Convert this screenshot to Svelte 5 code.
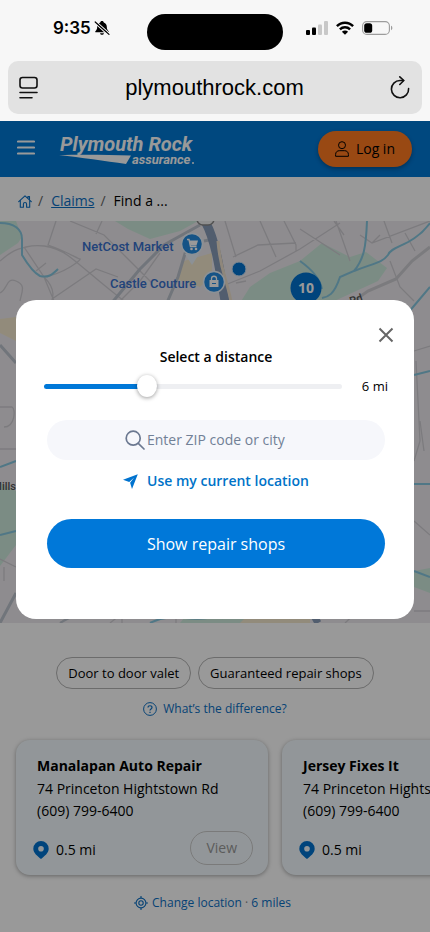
<script>
  let distance = $state(6);
  let zip = $state('');
  const min = 1;
  const max = 16;
  let ratio = $derived((distance - min) / (max - min));

  const filters = ['Door to door valet', 'Guaranteed repair shops'];
  const shops = [
    { name: 'Manalapan Auto Repair', address: '74 Princeton Hightstown Rd', phone: '(609) 799-6400', away: '0.5 mi' },
    { name: 'Jersey Fixes It', address: '74 Princeton Hightstown Rd', phone: '(609) 799-6400', away: '0.5 mi' }
  ];
</script>

<div class="screen">
  <div class="browser">
    <div class="status">
      <div class="clock">
        <span>9:35</span>
        <svg width="16" height="16" viewBox="0 0 16 16" aria-hidden="true">
          <path d="M8 1C6.900 1 6.300 1.700 6.200 2.400C4.200 3 3.200 4.800 3.200 6.800C3.200 9.500 2.300 10.200 1.400 11.200C1 11.700 1.300 12.200 1.800 12.200H14.200C14.700 12.200 15 11.700 14.600 11.200C13.700 10.200 12.800 9.500 12.800 6.800C12.800 4.800 11.800 3 9.800 2.400C9.700 1.700 9.100 1 8 1ZM6 13.200C6.300 14.300 7 14.800 8 14.800S9.700 14.300 10 13.200Z" fill="#000" />
          <path d="M1 3L14 15" stroke="#f7f7f7" stroke-width="1.200" />
          <path d="M2 1.500L15.500 13.500" stroke="#f7f7f7" stroke-width="1.200" />
          <path d="M1.200 2L15 14.400" stroke="#000" stroke-width="1.200" stroke-linecap="round" />
        </svg>
      </div>
      <div class="island"></div>
      <div class="signals">
        <svg width="22" height="14" viewBox="0 0 22 14" aria-hidden="true">
          <rect x="0" y="9" width="4" height="5" rx="1" />
          <rect x="6" y="6.500" width="4" height="7.500" rx="1" />
          <rect x="12" y="3.500" width="4" height="10.500" rx="1" fill="#c8c8c8" />
          <rect x="18" y="0" width="4" height="14" rx="1" fill="#c8c8c8" />
        </svg>
        <svg width="18" height="14" viewBox="0 0 18 14" aria-hidden="true">
          <g fill="none" stroke="#000" stroke-width="2.400">
            <path d="M.9 5.200C5.400.5 12.600.5 17.100 5.200" />
            <path d="M3.900 8.300C6.800 5.500 11.200 5.500 14.100 8.300" />
          </g>
          <path d="M9 13.800L5.900 10.700C7.700 9.200 10.300 9.200 12.100 10.700Z" />
        </svg>
        <svg width="31" height="14" viewBox="0 0 31 14" aria-hidden="true">
          <rect x=".6" y=".6" width="26.800" height="12.800" rx="4.200" fill="none" stroke="#9c9c9c" stroke-width="1.100" />
          <rect x="2.200" y="2.200" width="8" height="9.600" rx="2.600" />
          <path d="M29 4.800C30.800 5.300 30.800 8.700 29 9.200Z" fill="#9c9c9c" />
        </svg>
      </div>
    </div>
    <div class="address-bar">
      <button class="plain" aria-label="Page menu">
        <svg width="20" height="24" viewBox="0 0 20 24" fill="none" stroke="#111" stroke-width="1.600" stroke-linecap="round" aria-hidden="true">
          <rect x="1" y="1.500" width="17" height="10.500" rx="2.500" />
          <path d="M1 16.500H18M1 21.800H13" />
        </svg>
      </button>
      <span>plymouthrock.com</span>
      <button class="plain" aria-label="Reload">
        <svg width="20" height="24" viewBox="0 0 20 24" fill="none" stroke="#111" stroke-width="1.600" stroke-linecap="round" stroke-linejoin="round" aria-hidden="true">
          <path d="M13.500 4.500H10A8.600 8.600 0 1 0 18.600 12.600" />
          <path d="M9.800 .9L13.800 4.500L9.800 8.500" />
        </svg>
      </button>
    </div>
  </div>

  <div class="site">
    <header>
      <button class="plain" aria-label="Menu">
        <svg width="18" height="18" viewBox="0 0 18 18" stroke="#fff" stroke-width="2.200" stroke-linecap="round" aria-hidden="true">
          <path d="M1 1.500H17M1 7.500H17M1 13.500H17" />
        </svg>
      </button>
      <a class="logo" href="#home" aria-label="Plymouth Rock assurance">
        <svg width="138" height="36" viewBox="0 0 138 36" fill="#fff" aria-hidden="true">
          <text class="brand" x="1" y="20">Plymouth Rock</text>
          <path d="M0 24C18 23.500 48 23.500 72 24.500L67 33C46 30 22 26.500 0 24Z" />
          <text class="sub" x="73" y="33">assurance</text>
          <circle cx="134" cy="32" r="1" />
        </svg>
      </a>
      <button class="login">
        <svg width="14" height="16" viewBox="0 0 14 16" fill="none" stroke="#000" stroke-width="1" aria-hidden="true">
          <circle cx="7" cy="4.200" r="3.500" />
          <path d="M.6 15.300V13.500C.6 11 2.300 9.700 4.300 9.700H9.700C11.700 9.700 13.400 11 13.400 13.500V15.300Z" stroke-linejoin="round" />
        </svg>
        Log in
      </button>
    </header>

    <nav class="crumbs" aria-label="Breadcrumb">
      <a href="#home" aria-label="Home">
        <svg width="14" height="13" viewBox="0 0 14 13" fill="none" stroke="#0a6fc4" stroke-width="1.100" stroke-linejoin="round" stroke-linecap="round" aria-hidden="true">
          <path d="M.7 6.600L7 .9L13.300 6.600M2.300 5.400V12.300H5.400V9.200C5.400 7 8.600 7 8.600 9.200V12.300H11.700V5.400M11.500 4.800V1.600H9.900V3.200" />
        </svg>
      </a>
      <i>/</i>
      <a href="#claims">Claims</a>
      <i>/</i>
      <span>Find a ...</span>
    </nav>

    <div class="map">
      <svg viewBox="0 0 430 402" preserveAspectRatio="xMidYMid slice" role="img" aria-label="Map of nearby repair shops">
        <rect width="430" height="402" fill="#edeaee" />
        <g fill="#cde9dc">
          <path d="M0 0H16L22 16L18 22L0 34Z" />
          <path d="M115 0H198L180 10L150 18L128 8Z" />
          <path d="M240 82L250 66L270 52L300 40L322 22L350 36L366 31L387 47L378 60L330 82Z" />
          <path d="M0 262L16 270V324L0 345Z" />
          <path d="M414 350L430 347V372L414 366Z" />
          <path d="M190 390H250V402H180Z" />
        </g>
        <g fill="#f3e8cd">
          <path d="M0 98L16 96V120L0 112Z" />
          <path d="M184 40L212 32V54L200 66L176 58Z" />
          <path d="M252 390H310V402H240Z" />
        </g>
        <g fill="none" stroke="#cfcdd3" stroke-width="1.300">
          <path d="M0 72C8 68 6 56 16 60S22 70 20 80M0 40C14 28 18 28 26 26S52 22 70 36S98 60 124 80M56 0L48 24C66 30 78 38 80 38S66 52 44 56M70 0L104 14L128 38L152 62M96 13L102 0M44 56C60 72 50 82 48 90M110 90L140 60L160 32M52 78L96 48L118 56M36 50L46 42M24 26L44 56L54 80" />
          <path d="M225 0L236 36M260 0L276 36M284 0L296 24L296 30M220 66L260 50L300 28L340 2M233 36L258 24L296 22M236 62L246 60M336 0L350 40M360 14L372 22L430 0M334 0L344 14M384 0L392 22M405 12L415 30M390 40L400 66L414 80M372 22L380 14M300 8L340 34" />
          <path d="M0 186H12C16 188 15 206 4 206M0 228H16M414 130L430 125M414 240L420 220L416 140M420 200L424 230M0 338L16 346M414 300L430 314M414 390H430M4 346V360M110 402L124 391M176 386V402M122 386V402M60 402L76 390M345 402L360 388" />
        </g>
        <g fill="none" stroke="#bcc3cd" stroke-width="3">
          <path d="M110 84L140 48L164 24L200 4M166 84L178 56L190 16M0 402L16 372M0 124L16 142M214 18L204 20" />
          <path d="M348 84L368 70L396 58L412 40L430 26" stroke="#cecdd2" />
          <path d="M60 402L82 390M212 390L222 397L232 388M280 388L290 397L300 388" stroke-width="2" />
        </g>
        <path d="M205 0C216 20 220 50 226 86" fill="none" stroke="#879bb8" stroke-width="9" />
        <path d="M308 384L318 402" fill="none" stroke="#879bb8" stroke-width="7" />
        <path d="M218 20C220 50 228 60 232 86" fill="none" stroke="#efe2ce" stroke-width="3" />
        <g fill="none" stroke="#85c7df" stroke-width="2">
          <path d="M0 2C14 2 22 8 22 18V34C28 44 34 52 40 55C48 57 52 54 58 48" />
          <path d="M300 40C314 50 320 58 322 68M367 0C366 26 364 38 354 50L340 56C334 74 328 76 322 77M354 50C374 42 382 42 388 34C392 24 412 26 430 2M408 92L430 66" />
          <path d="M0 246L16 240M0 314L16 310M414 154L430 150M414 263H430M414 350L430 356M150 402C174 390 190 402 212 396" />
        </g>
        <g class="place">
          <text x="82" y="30">NetCost Market</text>
          <text x="110" y="67">Castle Couture</text>
        </g>
        <path d="M192 44L185 33H199Z" fill="#e9f2fb" />
        <circle cx="192" cy="23" r="10.500" fill="#248be0" stroke="#e9f2fb" stroke-width="1.500" />
        <path d="M187 18.500H189L190.500 25.500H196.500" fill="none" stroke="#fff" stroke-width="1.400" />
        <path d="M189.500 19.500H198L196.500 24.500H190.500Z" fill="#fff" />
        <circle cx="191.500" cy="28" r="1.300" fill="#fff" />
        <circle cx="196" cy="28" r="1.300" fill="#fff" />
        <circle cx="214" cy="61" r="10.500" fill="#248be0" stroke="#e9f2fb" stroke-width="1.500" />
        <path d="M209.500 59H218.500V66H209.500Z" fill="#fff" />
        <path d="M211.500 59V57.500C211.500 54.500 216.500 54.500 216.500 57.500V59" fill="none" stroke="#fff" stroke-width="1.300" />
        <path d="M212 62.500H216" stroke="#248be0" />
        <rect x="197" y="-11" width="17" height="15" rx="6" fill="#eee" stroke="#888" stroke-width="1.500" />
        <circle cx="239" cy="48" r="7" fill="#0072cf" stroke="#cfe3f5" />
        <circle cx="306" cy="67" r="15.500" fill="#0072cf" />
        <text class="count" x="306" y="72" text-anchor="middle">10</text>
        <text class="road" x="351" y="84" transform="rotate(-18 351 84)">Rd</text>
        <text class="road" x="16" y="269" text-anchor="end">Mills</text>
      </svg>
    </div>

    <main>
      <div class="filters">
        {#each filters as filter}
          <button>{filter}</button>
        {/each}
      </div>
      <a class="hint" href="#difference">
        <svg width="14" height="14" viewBox="0 0 14 14" fill="none" stroke="#0a6fc4" aria-hidden="true">
          <circle cx="7" cy="7" r="6.400" />
          <path d="M5 5.600C5 3.100 9 3.200 9 5.500C9 7 7 6.900 7 8.500M7 9.700V10.900" stroke-width="1.200" />
        </svg>
        What’s the difference?
      </a>

      <div class="shops">
        {#each shops as shop}
          <article>
            <h2>{shop.name}</h2>
            <p>{shop.address}</p>
            <p>{shop.phone}</p>
            <div class="foot">
              <div class="away">
                <svg width="16" height="18" viewBox="0 0 16 18" aria-hidden="true">
                  <path d="M8 0A7.700 7.700 0 0 0 .3 7.700C.3 12 4.500 15 8 18C11.500 15 15.700 12 15.700 7.700A7.700 7.700 0 0 0 8 0ZM8 4.900A2.800 2.800 0 1 1 8 10.500A2.800 2.800 0 1 1 8 4.900Z" fill="#0072cf" fill-rule="evenodd" />
                </svg>
                {shop.away}
              </div>
              <button>View</button>
            </div>
          </article>
        {/each}
      </div>

      <a class="hint change" href="#location">
        <svg width="14" height="14" viewBox="0 0 14 14" fill="none" stroke="#0a6fc4" stroke-width="1.100" aria-hidden="true">
          <circle cx="7" cy="7" r="4.900" /><circle cx="7" cy="7" r="2.200" />
          <path d="M7 0V2M7 12V14M0 7H2M12 7H14" />
        </svg>
        <span>Change location <b>·</b> 6 miles</span>
      </a>
    </main>

    <div class="overlay">
      <div class="dialog" role="dialog" aria-modal="true" aria-label="Change location">
        <button class="plain close" aria-label="Close">
          <svg width="16" height="16" viewBox="0 0 16 16" stroke="#666" stroke-width="2" aria-hidden="true">
            <path d="M1.500 1.500L14.500 14.500M14.500 1.500L1.500 14.500" />
          </svg>
        </button>
        <label class="title" for="distance">Select a distance</label>
        <div class="range">
          <input id="distance" type="range" {min} {max} bind:value={distance} style="--ratio: {ratio}" />
          <output for="distance">{distance} mi</output>
        </div>
        <label class="search">
          <svg width="20" height="20" viewBox="0 0 20 20" fill="none" stroke="#6b7890" stroke-width="1.700" stroke-linecap="round" aria-hidden="true">
            <circle cx="8.200" cy="8.200" r="7" /><path d="M13.300 13.300L19 19" />
          </svg>
          <input type="text" placeholder="Enter ZIP code or city" aria-label="ZIP code or city" bind:value={zip} />
        </label>
        <button class="plain locate">
          <svg width="15" height="15" viewBox="0 0 15 15" aria-hidden="true">
            <path d="M14.800 .2L0 5.800L6.200 8L11 3.800L7.100 8.700L9 15Z" fill="#0073cf" />
          </svg>
          Use my current location
        </button>
        <button class="submit">Show repair shops</button>
      </div>
    </div>
  </div>
</div>

<style>
  :global(body) {
    margin: 0;
    background: #999;
  }
  .screen {
    min-height: 100vh;
    display: flex;
    flex-direction: column;
    overflow: hidden;
    font-family: 'Open Sans', sans-serif;
    font-size: 14px;
    line-height: 22px;
    color: #000;
  }
  button {
    font: inherit;
    color: inherit;
    cursor: pointer;
  }
  svg {
    display: block;
    flex: none;
  }
  .plain {
    border: 0;
    padding: 0;
    background: none;
  }
  .browser {
    background: #f7f7f7;
    padding: 0 8px 7px;
  }
  .status {
    display: grid;
    grid-template-columns: 1fr 136px 1fr;
    align-items: center;
    padding: 14px 0 11px;
  }
  .clock {
    display: flex;
    align-items: center;
    gap: 3px;
    padding: 0 0 8px 45px;
    font-family: Inter, sans-serif;
    font-size: 17px;
    font-weight: 600;
  }
  .island {
    height: 36px;
    border-radius: 18px;
    background: #000;
  }
  .signals {
    display: flex;
    align-items: center;
    gap: 8px;
    padding: 0 0 8px 23px;
  }
  .address-bar {
    display: flex;
    align-items: center;
    justify-content: space-between;
    height: 53px;
    padding: 0 12px 0 11px;
    border-radius: 10px;
    background: #e2e2e2;
    font-family: 'Liberation Sans', sans-serif;
    font-size: 22px;
  }
  .site {
    position: relative;
    flex: 1;
    background: #fff;
  }
  header {
    display: flex;
    align-items: center;
    height: 56px;
    padding: 0 18px 0 17px;
    background: #0078d4;
  }
  .logo {
    margin: 0 auto 0 24px;
  }
  .brand {
    font: italic bold 20px Roboto, sans-serif;
  }
  .sub {
    font: italic bold 13px Roboto, sans-serif;
  }
  .login {
    display: flex;
    align-items: center;
    gap: 7px;
    height: 36px;
    padding: 0 17px;
    border: 0;
    border-radius: 18px;
    background: #ff7a20;
    box-shadow: 0 2px 4px rgb(0 0 0 / 30%);
    font-weight: 500;
  }
  .crumbs {
    display: flex;
    align-items: center;
    gap: 6px;
    height: 44px;
    padding: 4px 18px 0;
    box-sizing: border-box;
  }
  .crumbs i {
    padding-right: 2px;
    font-style: normal;
    color: #666;
  }
  a {
    color: #0a6fc4;
  }
  .map {
    height: 402px;
  }
  .map svg {
    width: 100%;
    height: 100%;
  }
  .place {
    font: 500 13px Roboto, sans-serif;
    fill: #3870cc;
  }
  .count {
    font: bold 14px 'Open Sans', sans-serif;
    fill: #fff;
  }
  .road {
    font: 500 11px Roboto, sans-serif;
    fill: #555;
  }
  main {
    display: flex;
    flex-direction: column;
    align-items: center;
    padding: 34px 0 16px;
  }
  .filters {
    display: flex;
    gap: 7px;
  }
  .filters button {
    height: 32px;
    padding: 0 11px;
    border: 1px solid #b4b4b4;
    border-radius: 16px;
    background: none;
    font-size: 13px;
  }
  .hint {
    display: flex;
    align-items: center;
    gap: 6px;
    margin-top: 9px;
    font-size: 12px;
    text-decoration: none;
  }
  .shops {
    display: flex;
    gap: 14px;
    align-self: stretch;
    margin-top: 20px;
    padding-left: 16px;
  }
  article {
    flex: none;
    width: 252px;
    box-sizing: border-box;
    padding: 15px 15px 10px 21px;
    border-radius: 14px;
    background: #f4fbff;
    box-shadow: 0 1px 4px rgb(0 0 0 / 35%);
  }
  h2,
  p {
    margin: 0;
    font-size: 14px;
  }
  h2 {
    padding-bottom: 1px;
  }
  h2 {
    line-height: 22px;
  }
  .foot {
    display: flex;
    align-items: center;
    justify-content: space-between;
    margin: 9px 0 0 -4px;
  }
  .away {
    display: flex;
    align-items: center;
    gap: 7px;
    padding-top: 4px;
  }
  .foot button {
    height: 34px;
    padding: 0 15px;
    border: 1px solid #ccc;
    border-radius: 17px;
    background: none;
    color: #999;
  }
  .change {
    margin: 17px 5px 0 0;
    gap: 4px;
  }
  .change b {
    font-weight: 400;
    color: #888;
  }
  .overlay {
    position: absolute;
    inset: 0;
    padding: 179px 16px 0;
    background: rgb(0 0 0 / 40%);
  }
  .dialog {
    display: flex;
    flex-direction: column;
    align-items: center;
    padding: 27px 26px 51px 28px;
    border-radius: 20px;
    background: #fff;
  }
  .close {
    align-self: flex-end;
    margin-right: -6px;
  }
  .title {
    margin-top: 3px;
    font-weight: 600;
  }
  .range {
    display: flex;
    align-items: center;
    align-self: stretch;
    gap: 20px;
    margin-top: 7px;
  }
  .range output {
    font-size: 13px;
    white-space: nowrap;
  }
  input[type='range'] {
    --fill: calc(10px + (100% - 20px) * var(--ratio));
    appearance: none;
    flex: 1;
    min-width: 0;
    height: 22px;
    margin: 0;
    background: none;
  }
  input[type='range']::-webkit-slider-runnable-track {
    height: 5px;
    border-radius: 3px;
    background: linear-gradient(to right, #0078d8 var(--fill), #eeeff2 var(--fill));
  }
  input[type='range']::-webkit-slider-thumb {
    appearance: none;
    width: 20px;
    height: 22px;
    margin-top: -9px;
    border-radius: 50%;
    background: #fff;
    box-shadow: 0 1px 4px rgb(0 0 0 / 40%);
  }
  .search {
    display: flex;
    align-items: center;
    justify-content: center;
    gap: 2px;
    align-self: stretch;
    height: 40px;
    margin: 23px 3px 0;
    padding-right: 20px;
    box-sizing: border-box;
    border-radius: 20px;
    background: #f6f7fb;
  }
  .search input {
    width: 140px;
    padding: 0;
    border: 0;
    outline: 0;
    background: none;
    font: inherit;
    color: #000;
  }
  .search input::placeholder {
    color: #718096;
    opacity: 1;
  }
  .locate {
    display: flex;
    align-items: center;
    gap: 9px;
    margin-top: 10px;
    font-weight: 600;
    color: #0073c8;
  }
  .submit {
    align-self: stretch;
    height: 49px;
    margin: 27px 3px 0;
    border: 0;
    border-radius: 25px;
    background: #0078d9;
    color: #fff;
    font-size: 16px;
  }
</style>
